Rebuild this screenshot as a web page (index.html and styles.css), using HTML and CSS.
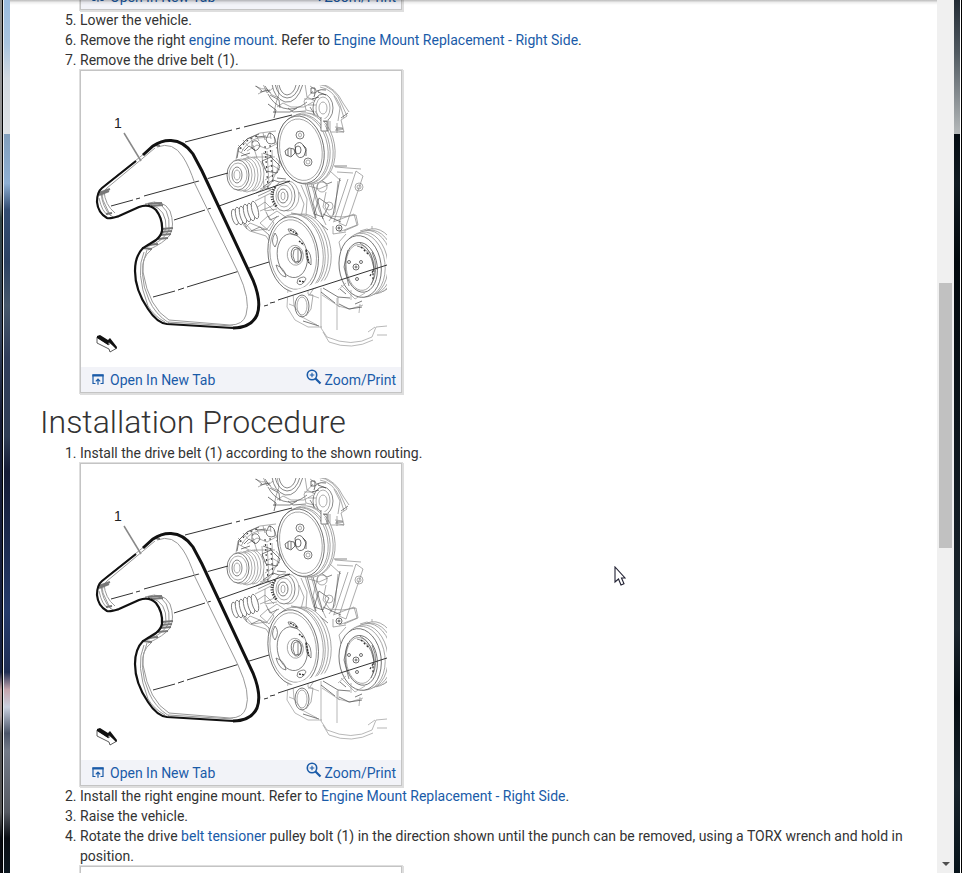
FILE: index.html
```html
<!DOCTYPE html>
<html lang="en">
<head>
<meta charset="utf-8">
<title>Drive Belt Replacement</title>
<link rel="stylesheet" href="styles.css">
</head>
<body>
<svg class="defs" aria-hidden="true">
  <symbol id="icon-tab" viewBox="0 0 12 11">
    <path d="M3.500 9.500H1V1h10v8.500H8.500" fill="none" stroke="currentColor" stroke-width="1.200"/>
    <path d="M.4.300h11.200v2.200H.4z" fill="currentColor"/>
    <path d="M6 10.800V5.500M3.800 7.300 6 5.100l2.200 2.200" fill="none" stroke="currentColor" stroke-width="1.200"/>
  </symbol>
  <symbol id="icon-zoom" viewBox="0 0 16 16">
    <circle cx="6" cy="6" r="4.700" fill="none" stroke="currentColor" stroke-width="1.600"/>
    <path d="m9.500 9.500 5 5" stroke="currentColor" stroke-width="2.200"/>
    <path d="M3.700 6h4.600M6 3.700v4.600" stroke="currentColor" stroke-width="1.100"/>
  </symbol>
  <symbol id="belt" viewBox="81 71 320 296">
    <clipPath id="trim"><path d="M225 85h162v262H225z"/></clipPath>
    <g clip-path="url(#trim)" fill="none" stroke="#888" stroke-width=".7">
      <!-- cover above the pulleys -->
      <path d="M255 86q7 4 12 3l5 6 7 3M258 94l8-4 5 3M263 84l4 9 6-5M277 84l2 10-3 9-2 10M277 107l6-4 8 4h13l9-5"/>
      <path d="M272 84q2 14 13 18 12 2 18-18M275 84q3 13 12 14 9 0 13-14M279 85q2 9 8 10 7-1 9-10M268 94q5 10 15 14 12 4 24-6" stroke="#555"/>
      <path d="M305 84l2 13 8 4M310 86l9 6M317 84q18 2 25 21l5 11-6 4 3 12-9-2M320 87q13 2 20 18l4 13M322 84q14 4 21 19l6 9M313 91l-9 10 2 9 8 2M304 99h10M308 105h8M315 111l8 14M334 96l6 12-2 13"/>
      <path d="M256 86l6 5M260 92l10-2M265 86l4 6M270 95l9 5 1 8M273 112h17l7-4M288 108l5 4 13-1M310 107l5 8M341 118l7-5" stroke="#555"/>
      <ellipse cx="323" cy="108" rx="10" ry="14" stroke="#555"/><ellipse cx="323" cy="108" rx="7" ry="11"/><ellipse cx="323" cy="108" rx="4" ry="6"/>
      <path d="M323 119v14h7v-12M335 127l8 1M331 132h13M337 123v10"/>
      <path d="M311 88h4v5h-4zM268 104l8 6-2 8M312 99l7-2M318 92l8 3M314 97q1-9 12-7M336 129h7" stroke="#333"/>
      <!-- alternator -->
      <path d="M236 160l2-12 9-9 13-6 16-2M241 153q6-12 17-15l13-1M238 145l5 5M243 140l5 6M250 137l3 6M256 135l3 6M263 133l2 7M270 132l1 7M274 137l7 18-4 16-7 14-10 4M247 151l10-6 10 4 9-5M254 157h21M262 153l2 35M267 151l2 34M272 150l1 30M260 171l12-6 8 5M265 180l13-8M276 158l7 9M238 151l11 6M253 145l4 13"/>
      <path d="M237 158l2-11 8-8 12-5M252 142q6-4 8 4-4 8-8 2zM269 133q7 1 6 10-8 3-9-4zM262 161l9-4 9 9-3 7-11-2zM263 153l8 3M263 187l10-7 9 3M244 151l5-5 6 4M241 156l9-3M257 137l9-1M276 148l6-2M277 178l9 1" stroke="#444"/>
      <path d="M265 146l3 42M270 145l3 38M240 149q7-11 18-13" stroke="#444" stroke-width="1.100" stroke-dasharray="2 3"/>
      <g fill="#fff"><ellipse cx="253" cy="174" rx="11" ry="17"/><ellipse cx="250" cy="174" rx="11" ry="17"/><ellipse cx="247" cy="175" rx="11" ry="17"/><ellipse cx="244" cy="175" rx="11" ry="16"/><ellipse cx="241" cy="175" rx="11" ry="16"/><ellipse cx="238" cy="175" rx="11" ry="15" stroke="#444"/><ellipse cx="238" cy="175" rx="9" ry="12"/><ellipse cx="237" cy="175" rx="5" ry="8" stroke="#555"/><ellipse cx="237" cy="175" rx="3" ry="5"/></g>
      <!-- support struts -->
      <path d="M305 183l8 28 6 18M311 183l8 27 7 15M318 183l-5 20 4 12M338 181l-3 31-6 9M348 179l-14 42M356 171l-17 52 7 3 17-50zM335 167l26 2M337 172l16 1M316 180l14-9 11 10M309 186l10 3 9-4M326 192l-3 15 9 12M333 222l21-8 3 11-18 7"/>
      <path d="M307 183l9 35M313 184l10 35M340 178l-7 37M319 198l10 7-6 12-9-3zM323 214l18 8M312 217l16 13M334 166h13M321 180l6 4 5-2" stroke="#555"/>
      <circle cx="359" cy="187" r="4"/><circle cx="359" cy="187" r="2"/><circle cx="322" cy="187" r="5"/><circle cx="329" cy="206" r="4"/>
      <circle cx="339" cy="228" r="3" stroke="#333"/><circle cx="339" cy="228" r="1" stroke="#222"/>
      <!-- power steering pulley -->
      <g fill="#fff" transform="rotate(-10 305 150)"><ellipse cx="311" cy="149" rx="24" ry="35"/><ellipse cx="308" cy="149" rx="25" ry="36"/><ellipse cx="305" cy="149" rx="25" ry="35"/><ellipse cx="303" cy="149" rx="25" ry="35"/><ellipse cx="301" cy="149" rx="23" ry="34" stroke="#444"/><ellipse cx="301" cy="149" rx="21" ry="31"/></g>
      <ellipse cx="300" cy="135" rx="4" ry="4" stroke="#444"/><ellipse cx="300" cy="135" rx="1.500" ry="2"/><ellipse cx="308" cy="162" rx="4" ry="4" stroke="#444"/><ellipse cx="308" cy="162" rx="2" ry="2"/>
      <path d="M295 145q5-5 8 0l3 5-2 6q-5 4-8-2zM285 151l4-3 5 1 1 4-4 4-5-2zM288 149v7M291 149v7M303 145l3 3v8" stroke="#333"/><ellipse cx="298" cy="150" rx="3" ry="4" stroke="#333"/>
      <path d="M321 117v14h7v-11M323 121h4v10" fill="#fff" stroke="#555"/>
      <!-- tensioner with spring -->
      <path d="M255 201l18-9 11 5M256 208l9-6 9 9M260 211l17-7M265 196v15l12-2M245 223l7 8 15-2 10-13M241 219q2 8 9 12l16 5 7 11M268 217l9-6 10 7M260 223l8-7 6 7-5 8zM246 227l4-4 17 7M299 192l5 12-4 16-9 2M301 185l6 14-1 17"/>
      <path d="M256 193l9-5 9 2M258 196l13-6M266 212l4 8 9-4M251 231l9-4 9 8 1 12M243 221l4 8M291 213l13 2 10 8" stroke="#666"/>
      <g stroke="#555" fill="#fff"><ellipse cx="235" cy="217" rx="3" ry="8" transform="rotate(-15 235 217)"/><ellipse cx="239" cy="216" rx="3" ry="9" transform="rotate(-15 239 216)"/><ellipse cx="243" cy="215" rx="3" ry="9" transform="rotate(-15 243 215)"/><ellipse cx="247" cy="213" rx="3" ry="9" transform="rotate(-15 247 213)"/><ellipse cx="251" cy="212" rx="3" ry="9" transform="rotate(-15 251 212)"/><ellipse cx="255" cy="210" rx="3" ry="9" transform="rotate(-15 255 210)"/></g>
      <g fill="#fff"><ellipse cx="288" cy="196" rx="11" ry="15"/><ellipse cx="284" cy="196" rx="11" ry="15" stroke="#555"/><ellipse cx="284" cy="196" rx="8" ry="11"/><ellipse cx="283" cy="196" rx="5" ry="7" stroke="#444"/><ellipse cx="283" cy="196" rx="2" ry="4"/></g>
      <path d="M275 187q-7 10 2 20" stroke="#333" stroke-width="3" stroke-dasharray="1 1.500"/>
      <!-- crankshaft pulley -->
      <g fill="#fff" transform="rotate(-8 297 253)"><ellipse cx="306" cy="253" rx="25" ry="38"/><ellipse cx="303" cy="253" rx="25" ry="38"/><ellipse cx="300" cy="253" rx="25" ry="38"/><ellipse cx="297" cy="253" rx="26" ry="39"/><ellipse cx="293" cy="254" rx="25" ry="38" stroke="#444"/><ellipse cx="293" cy="254" rx="23" ry="35"/><ellipse cx="292" cy="255" rx="15" ry="22" stroke="#555"/><ellipse cx="295" cy="255" rx="8" ry="10"/><ellipse cx="296" cy="255" rx="5" ry="8" stroke="#444"/></g>
      <path d="M288 229q7-1 10 6-8 1-10-6zM275 233q-5 9 0 14 5-8 0-14zM276 265q3 11 10 12-1-9-10-12zM298 279q7-4 8 0-5 9-9 4zM306 249q6 4 5 16-6-4-5-16zM294 250l5-2 3 5-2 8-5 1-2-6zM298 249v13" stroke="#555"/>
      <path d="M290 230l7 4M306 250l3 13M299 281l6 1M299 241l5 4" stroke="#333" stroke-width="1.400" stroke-dasharray="2 1"/>
      <!-- air conditioning compressor pulley -->
      <path d="M333 226v8l13-2M330 216l12 1 14-2 2 10-14 6M346 234l-7 8 2 9M360 231l7-2 20 8M372 226v7"/>
      <g fill="#fff" transform="rotate(-7 364 265)"><ellipse cx="376" cy="262" rx="22" ry="32"/><ellipse cx="373" cy="263" rx="22" ry="32"/><ellipse cx="370" cy="263" rx="22" ry="32"/><ellipse cx="366" cy="264" rx="22" ry="32"/><ellipse cx="363" cy="265" rx="22" ry="32"/><ellipse cx="360" cy="266" rx="21" ry="31" stroke="#444"/><ellipse cx="361" cy="267" rx="16" ry="25" stroke="#444"/><ellipse cx="360" cy="267" rx="14" ry="23"/></g>
      <path d="M357 246q13 1 17 22M372 252q8 18-1 33M360 243q14 7 14 29M348 250l-4 17 5 19" stroke="#555"/>
      <g stroke="#333"><circle cx="356" cy="267" r="3"/><circle cx="356" cy="267" r="1"/><circle cx="349" cy="262" r="1.500"/><circle cx="361" cy="262" r="1.500"/><circle cx="357" cy="279" r="1.500"/><path d="M370 276l3-5v10M361 247l8 8" stroke-width="1.300" stroke-dasharray="2 2"/></g>
      <!-- engine block and oil pan -->
      <g stroke="#999"><path d="M288 289l-1 18 8 13 13 7h14M293 293l1 13 8 11 15 8M308 286v8l11 4M321 288v40l6 9q25 11 45 0l4-10 11-1M337 298v32M338 297v9l12 3 13-4M341 285l14 14 10-6M322 295l18 12M375 327l-7 5M377 335h10M323 332l6 10q23 9 44-2M289 304l5 2M346 283l-8 7M351 290v10M360 304l-1 9"/></g>
      <path d="M323 288l15 9 12 1M339 304l10 5 13-2M355 304l7-3M321 292l14 11M340 289l6 5M303 321l16 5" stroke="#444"/>
      <ellipse cx="302" cy="306" rx="7" ry="11" stroke="#444"/><ellipse cx="302" cy="306" rx="5" ry="9"/><path d="M308 295h5l-2 14-5 7M310 294l4-6"/>
    </g>
    <!-- alignment lines -->
    <path d="M279 298L338 278" stroke="#fff" stroke-width="4"/>
    <path d="M185 142l47-12M236 129l4-1M244 127l48-12M111 206l22-6M136 199l4-1M144 196l84-23M174 220l31-10M208 209l7-2M219 206l71-25M153 297l22-6M178 290l6-2M187 287l82-25M264 306l4-1M270 303l5-1M278 300L387 265" fill="none" stroke="#333" stroke-width="1"/>
    <path d="M124 133l17 28" stroke="#888" stroke-width="1.500"/>
    <!-- belt -->
    <path d="M178 148Q190 150 197 165L240 265Q254 296 249 312" fill="none" stroke="#fff" stroke-width="9"/>
    <g fill="none" stroke="#999" stroke-width="1">
      <path d="M155 148L107 188q-6 5-4 12l7 15q4 4 9 2M150 149l-45 36M101 192q1 15 10 24M99 198q3 14 9 17M104 191q1 14 11 22"/>
      <path d="M157 147q16-6 26 10 6 9 12 27l43 88q13 28 8 43-3 10-16 10l-61-5q-20-12-26-48-2-14 8-22M147 250q-10 24 2 50 6 14 20 23M144 252q-9 20 4 54 6 10 17 16M168 322l65 4"/>
      <path d="M145 204q18-6 25 7 5 14 0 24-6 8-22 15M154 202q17 4 15 28-7 12-20 16M151 205q16 4 15 24-8 13-19 18"/>
    </g>
    <path d="M99 193l11-4M99 195l10-4M148 204l14-1M151 206l12-1M162 229l11-1M161 232l11-1M160 235l11-1M157 239l11-1M147 245l11-1M142 248l10 1M106 214l6-1M155 145l5 1" stroke="#777" stroke-width="2"/>
    <g fill="none" stroke="#111" stroke-width="2.200">
      <path d="M136 161L102 188Q97 192 97 202Q98 213 107 218Q110 219 119 216L139 207Q149 203 156 210Q163 219 162 231Q161 236 156 240L143 248Q135 256 135 271Q135 290 148 309Q157 323 167 324L233 328"/>
      <path d="M143 155L153 146Q162 140 171 140.500Q184 141 193 154L202 171L253 280Q262 302 257 315Q251 328 233 328" stroke-width="3"/>
    </g>
    <text x="114" y="128" class="callout">1</text>
    <!-- direction arrow -->
    <path d="M97 337l12 8v-3l8 6-7 4-1-3-12-6z" fill="#fff" stroke="#333" stroke-width=".8"/>
    <path d="M97 336l3-1 8 5 2-2 7 9-1 2-7-7-1 3-11-7z" fill="#111"/>
  </symbol>
</svg>
<div class="window">
  <div class="frame-left"><span class="outer-image"></span><span class="inner-image"></span></div>
  <main class="document">
    <div class="article">
      <ol start="4">
        <li class="continued"><figure>
          <svg class="diagram" viewBox="0 0 320 296"></svg>
          <figcaption><a href="#"><svg class="tab-icon"><use href="#icon-tab"/></svg>Open In New Tab</a><a href="#"><svg class="zoom-icon"><use href="#icon-zoom"/></svg>Zoom/Print</a></figcaption>
        </figure></li>
        <li>Lower the vehicle.</li>
        <li>Remove the right <a href="#">engine mount</a>. Refer to <a href="#">Engine Mount Replacement - Right Side</a>.</li>
        <li>Remove the drive belt (1).
          <figure>
            <svg class="diagram" viewBox="0 0 320 296" role="img" aria-label="Drive belt routing"><use href="#belt"/></svg>
            <figcaption><a href="#"><svg class="tab-icon"><use href="#icon-tab"/></svg>Open In New Tab</a><a href="#"><svg class="zoom-icon"><use href="#icon-zoom"/></svg>Zoom/Print</a></figcaption>
          </figure></li>
      </ol>
      <h2>Installation Procedure</h2>
      <ol>
        <li>Install the drive belt (1) according to the shown routing.
          <figure>
            <svg class="diagram" viewBox="0 0 320 296" role="img" aria-label="Drive belt routing"><use href="#belt"/></svg>
            <figcaption><a href="#"><svg class="tab-icon"><use href="#icon-tab"/></svg>Open In New Tab</a><a href="#"><svg class="zoom-icon"><use href="#icon-zoom"/></svg>Zoom/Print</a></figcaption>
          </figure></li>
        <li>Install the right engine mount. Refer to <a href="#">Engine Mount Replacement - Right Side</a>.</li>
        <li>Raise the vehicle.</li>
        <li>Rotate the drive <a href="#">belt tensioner</a> pulley bolt (1) in the direction shown until the punch can be removed, using a TORX wrench and hold in position.
          <figure><svg class="diagram" viewBox="0 0 320 296"></svg></figure></li>
      </ol>
    </div>
  </main>
  <div class="scrollbar"><span class="thumb"></span><span class="down"></span></div>
  <div class="frame-right"></div>
  <svg class="pointer" viewBox="0 0 12 20"><path d="M1 1v15l3.500-3 2.500 6 3-1.300L7.500 12H11z" fill="#fff" stroke="#223" stroke-width="1.100"/></svg>
</div>
</body>
</html>
```
FILE: styles.css
```css
* { box-sizing: border-box; }
body {
  margin: 0;
  background: #fff;
  color: #333;
  font: 14px/20px Roboto, sans-serif;
}
a { color: #1a5ba8; text-decoration: none; }
.defs { position: absolute; width: 0; height: 0; }

.window {
  position: relative;
  display: flex;
  height: 100vh;
  overflow: hidden;
}
.frame-left { display: flex; flex: 0 0 10px; }
.outer-image {
  width: 3px;
  border-right: 1px solid #000;
  background: linear-gradient(#8c8c8c, #999 22%, #344 25%, #33415a 38%, #151a33 48%, #17213f 77%, #b99 79%, #a99 82%, #555 84%, #555 93%, #080a10 96%);
}
.inner-image {
  flex: 1;
  border-left: 1px solid #e8edf2;
  background: linear-gradient(#9bbce0, #aac5df 5%, #d3dae0 9%, #dfe2e5 15.3%, #829fbc 15.4%, #8fb0d4 21%, #334d72 24%, #2c4263 30%, #46586b 35%, #303d5b 41%, #2f3d55 50%, #151b36 54%, #1b294c 61%, #253b6b 70%, #202f55 77%, #c6a5ad 79%, #c9d0df 81%, #4c5669 84%, #737b88 86%, #565a62 93%, #0b0e14 96%, #0c1820);
}

.document { flex: 1; min-width: 0; overflow: hidden; position: relative; }
.document::before {
  content: "";
  position: absolute;
  z-index: 1;
  inset: 0 0 auto;
  height: 5px;
  background: linear-gradient(#0004, #0001 50%, #0000);
}
.article { margin-top: -313px; padding: 0 20px 0 30px; }
ol { margin: 0; padding-left: 40px; }
.continued { list-style: none; }
h2 { margin: 0; padding: 12px 0 4px; font-size: 32px; line-height: 34px; font-weight: 300; }

figure {
  margin: 0;
  max-width: 322px;
  border: 1px solid #c4c4c4;
  box-shadow: 0 0 0 1px #dedede, 1px 1px 0 1px #dedede;
}
.diagram { display: block; width: 100%; }
.callout { font: 14px "Liberation Sans", sans-serif; fill: #222; }
figcaption {
  display: flex;
  justify-content: space-between;
  height: 25px;
  padding: 0 5px 0 11px;
  background: #f2f3f8;
  line-height: 26px;
}
figcaption a { display: flex; }
.tab-icon { width: 12px; height: 11px; margin: 7px 6px 0 0; }
.zoom-icon { width: 16px; height: 16px; margin: 2px 2px 0 0; }

.scrollbar {
  display: flex;
  flex-direction: column;
  flex: 0 0 17px;
  padding: 0 2px;
  background: #f0f0f0;
}
.thumb { height: 30.4vh; margin-top: 32.4vh; background: #c1c1c1; }
.down {
  margin: auto auto 7px;
  border: 4px solid transparent;
  border-top-color: #505050;
  border-bottom: 0;
}
.frame-right {
  flex: 0 0 8px;
  border-right: 1px solid #000;
  background: linear-gradient(#fff, #fff) right / 1px 100% no-repeat, linear-gradient(#232c35, #505960 6%, #b5b9ba 15.300%, #040c12 15.400%, #101a21 21%, #02090d 30%, #0c151b 48%, #1b262e 72%, #040c11 80%, #17232b 90%, #08141b);
}
.pointer { position: absolute; left: 614px; top: 566px; width: 12px; height: 20px; }
```
